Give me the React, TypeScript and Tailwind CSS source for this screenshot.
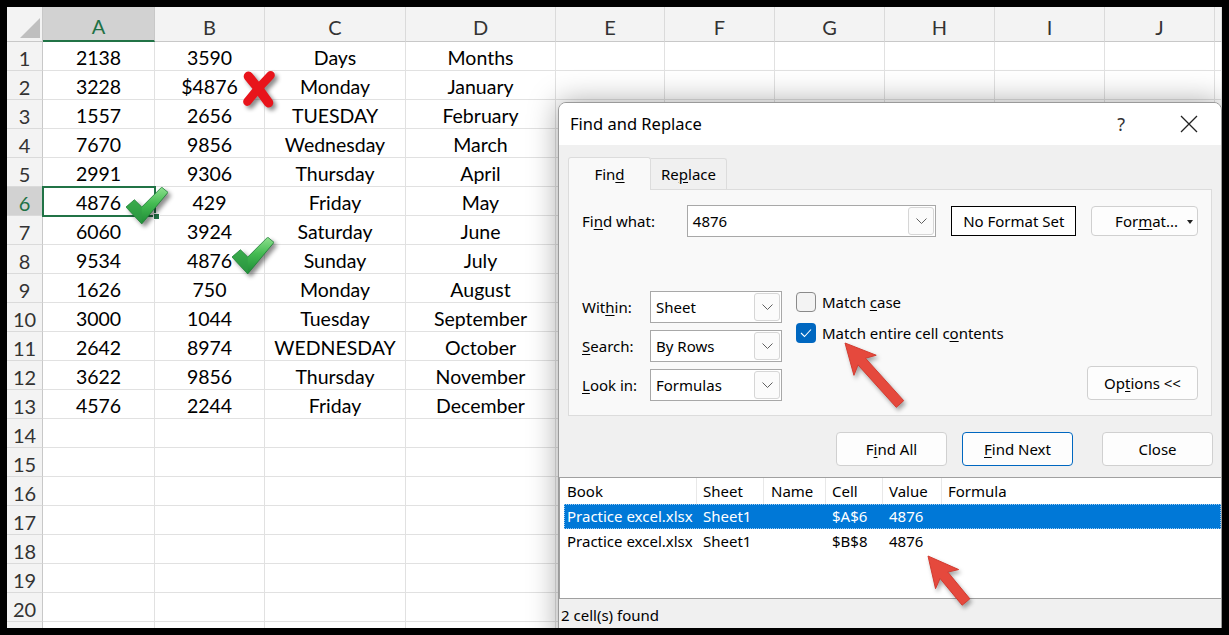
import React from "react";

const COLS = ["A", "B", "C", "D", "E", "F", "G", "H", "I", "J", ""];
const DATA: string[][] = [
  ["2138", "3590", "Days", "Months"],
  ["3228", "$4876", "Monday", "January"],
  ["1557", "2656", "TUESDAY", "February"],
  ["7670", "9856", "Wednesday", "March"],
  ["2991", "9306", "Thursday", "April"],
  ["4876", "429", "Friday", "May"],
  ["6060", "3924", "Saturday", "June"],
  ["9534", "4876", "Sunday", "July"],
  ["1626", "750", "Monday", "August"],
  ["3000", "1044", "Tuesday", "September"],
  ["2642", "8974", "WEDNESDAY", "October"],
  ["3622", "9856", "Thursday", "November"],
  ["4576", "2244", "Friday", "December"],
];

function arrowPoints(tx: number, ty: number, ex: number, ey: number) {
  const dx = ex - tx;
  const dy = ey - ty;
  const L = Math.hypot(dx, dy);
  const ux = dx / L;
  const uy = dy / L;
  const px = -uy;
  const py = ux;
  const headLen = 30;
  const headW = 15;
  const shaftW = 5;
  const notch = 25;
  const bx = tx + ux * headLen;
  const by = ty + uy * headLen;
  const nx = tx + ux * notch;
  const ny = ty + uy * notch;
  const pts = [
    [tx, ty],
    [bx + px * headW, by + py * headW],
    [nx + px * shaftW, ny + py * shaftW],
    [ex + px * shaftW, ey + py * shaftW],
    [ex - px * shaftW, ey - py * shaftW],
    [nx - px * shaftW, ny - py * shaftW],
    [bx - px * headW, by - py * headW],
  ];
  return pts.map((p) => p.join(",")).join(" ");
}

function Check({ left, top }: { left: number; top: number }) {
  return (
    <svg
      className="absolute"
      style={{ left, top, filter: "drop-shadow(3px 3px 2px rgba(0,0,0,0.45))" }}
      width="42"
      height="37"
      viewBox="0 0 40 35"
    >
      <defs>
        <linearGradient id={`g${left}`} x1="0" y1="0" x2="0" y2="1">
          <stop offset="0" stopColor="#8ee08e" />
          <stop offset="0.45" stopColor="#44bb52" />
          <stop offset="1" stopColor="#1e8a36" />
        </linearGradient>
      </defs>
      <polygon points="0,19 8,12 15,19 34,0 40,5 15,35" fill={`url(#g${left})`} stroke="#23803a" strokeWidth="0.8" />
      <polygon points="0,19 8,12 15,19 15,35" fill="#2f9b45" opacity="0.6" />
    </svg>
  );
}

function Chevron() {
  return (
    <svg width="11" height="6" viewBox="0 0 11 6">
      <polyline points="0.5,0.5 5.5,5.5 10.5,0.5" fill="none" stroke="#5f5f5f" strokeWidth="1" />
    </svg>
  );
}

function DropBtn() {
  return (
    <div className="w-[26px] h-[28px] mr-[1px] border border-[#d6d6d6] rounded-[3px] bg-[#fbfbfb] flex items-center justify-center">
      <Chevron />
    </div>
  );
}

function Select({ value }: { value: string }) {
  return (
    <div className="w-[132px] h-[32px] bg-white border border-[#a8a8a8] flex items-center justify-between pl-[5px]">
      <span>{value}</span>
      <DropBtn />
    </div>
  );
}

function Btn({ children, w, h, blue }: { children: React.ReactNode; w: string; h?: string; blue?: boolean }) {
  return (
    <div
      className={`${w} ${h ?? "h-[34px]"} rounded-[4px] border ${
        blue ? "border-[#0067c0]" : "border-[#d0d0d0]"
      } bg-[#fdfdfd] flex items-center justify-center`}
    >
      {children}
    </div>
  );
}

export default function App() {
  const rows = Array.from({ length: 21 }, (_, i) => i + 1);
  return (
    <div className="w-[1229px] h-[635px] bg-black p-[7px]">
      <div className="relative w-[1215px] h-[621px] overflow-hidden bg-white font-['Lato',sans-serif]">
        {/* Spreadsheet grid */}
        <div className="grid grid-cols-[36px_112px_110px_141px_150px_109px_110px_110px_110px_110px_110px_1fr] grid-rows-[35px_repeat(21,29px)]">
          {/* corner */}
          <div className="relative bg-[#f3f3f3] border-r border-b border-[#c8c8c8]">
            <svg className="absolute right-[2px] bottom-[3px]" width="20" height="20" viewBox="0 0 20 20">
              <polygon points="20,0 20,20 0,20" fill="#bfbfbf" />
            </svg>
          </div>
          {COLS.map((c, i) => (
            <div
              key={c + i}
              className={`flex items-center justify-center text-[20px] pt-[5px] border-r ${
                c === "A"
                  ? "bg-[#d2d2d2] text-[#1e7145] border-b-2 border-b-[#217346] border-r-[#c8c8c8]"
                  : "bg-[#f3f3f3] text-[#333] border-b border-b-[#c8c8c8] border-r-[#dadada]"
              }`}
            >
              {c}
            </div>
          ))}
          {rows.map((r) => (
            <React.Fragment key={r}>
              <div
                className={`flex items-center justify-center text-[20px] pt-[3px] border-r border-r-[#c8c8c8] border-b border-b-[#dadada] ${
                  r === 6 ? "bg-[#d2d2d2] text-[#1e7145]" : "bg-[#f3f3f3] text-[#333]"
                }`}
              >
                {r <= 20 ? r : ""}
              </div>
              {COLS.map((c, ci) => (
                <div
                  key={c + ci}
                  className="flex items-center justify-center text-[19.5px] text-black border-r border-b border-[#e1e1e1] pt-[4px]"
                >
                  {ci < 4 && r <= 13 ? DATA[r - 1][ci] : ""}
                </div>
              ))}
            </React.Fragment>
          ))}
        </div>

        {/* Selected cell A6 */}
        <div className="absolute left-[35px] top-[179px] w-[114px] h-[31px] border-2 border-[#217346]" />
        <div className="absolute left-[146px] top-[206px] w-[7px] h-[7px] bg-[#217346] border border-white" />

        {/* Marks */}
        <svg
          className="absolute left-[234px] top-[63px]"
          style={{ filter: "drop-shadow(3px 3px 2px rgba(0,0,0,0.45))" }}
          width="36"
          height="38"
          viewBox="0 0 34 36"
        >
          <path d="M7 6 C13 13, 20 22, 26 31" fill="none" stroke="#e8141b" strokeWidth="9" strokeLinecap="round" />
          <path d="M28 5 C20 13, 13 21, 6 30" fill="none" stroke="#e8141b" strokeWidth="8" strokeLinecap="round" />
        </svg>
        <Check left={119} top={180} />
        <Check left={225} top={230} />

        {/* Dialog */}
        <div className="absolute left-[551px] top-[95px] w-[664px] h-[545px] bg-[#f0f0f0] border border-[#9a9a9a] rounded-t-[8px] shadow-[0_0_30px_rgba(0,0,0,0.35)] font-['Noto_Sans',sans-serif] text-[15px] text-black flex flex-col overflow-hidden">
          <div className="h-[42px] bg-white flex items-center justify-between pl-[11px] pr-[23px] shrink-0">
            <span className="text-[16.5px]">Find and Replace</span>
            <div className="flex items-center gap-[55px]">
              <span className="text-[18px] text-[#333]">?</span>
              <svg width="18" height="18" viewBox="0 0 18 18">
                <path d="M1 1 L17 17 M17 1 L1 17" stroke="#222" strokeWidth="1.3" />
              </svg>
            </div>
          </div>
          <div className="px-[9px] pt-[12px] flex flex-col flex-1">
            {/* Tabs */}
            <div className="flex h-[33px] relative z-10">
              <div className="w-[83px] h-[33px] bg-[#f9f9f9] border border-b-0 border-[#dcdcdc] rounded-t-[3px] flex items-center justify-center">
                <span>
                  Fin<span className="underline underline-offset-2">d</span>
                </span>
              </div>
              <div className="w-[76px] h-[31px] mt-[1px] bg-[#f0f0f0] border-t border-r border-[#dcdcdc] rounded-tr-[3px] flex items-center justify-center">
                <span>
                  Re<span className="underline underline-offset-2">p</span>lace
                </span>
              </div>
            </div>
            {/* Panel */}
            <div className="-mt-[1px] w-[644px] h-[227px] bg-[#f9f9f9] border border-[#dcdcdc] px-[13px] pt-[15px] flex flex-col">
              <div className="flex items-center h-[32px]">
                <span className="w-[105px]">
                  Fi<span className="underline underline-offset-2">n</span>d what:
                </span>
                <div className="w-[250px] h-[32px] bg-white border border-[#a8a8a8] flex items-center justify-between pl-[5px]">
                  <span>4876</span>
                  <DropBtn />
                </div>
                <div className="ml-[15px] w-[125px] h-[30px] border border-black bg-white flex items-center justify-center">
                  No Format Set
                </div>
                <div className="ml-[15px] relative w-[107px] h-[30px] rounded-[4px] border border-[#d0d0d0] bg-[#fdfdfd] flex items-center justify-center pl-[4px]">
                  <span>
                    For<span className="underline underline-offset-2">m</span>at...
                  </span>
                  <svg className="absolute right-[4px] top-[13px]" width="6" height="4" viewBox="0 0 6 4">
                    <polygon points="0,0 6,0 3,4" fill="#222" />
                  </svg>
                </div>
              </div>
              <div className="flex mt-[54px]">
                <div className="flex flex-col gap-[7px]">
                  <div className="flex items-center h-[32px]">
                    <span className="w-[68px]">
                      Wit<span className="underline underline-offset-2">h</span>in:
                    </span>
                    <Select value="Sheet" />
                  </div>
                  <div className="flex items-center h-[32px]">
                    <span className="w-[68px]">
                      <span className="underline underline-offset-2">S</span>earch:
                    </span>
                    <Select value="By Rows" />
                  </div>
                  <div className="flex items-center h-[32px]">
                    <span className="w-[68px]">
                      <span className="underline underline-offset-2">L</span>ook in:
                    </span>
                    <Select value="Formulas" />
                  </div>
                </div>
                <div className="ml-[14px] mt-[1px] flex flex-col gap-[11px]">
                  <div className="flex items-center h-[20px] gap-[6px]">
                    <div className="w-[20px] h-[20px] rounded-[4px] border border-[#8a8a8a] bg-[#f3f3f3]" />
                    <span>
                      Match <span className="underline underline-offset-2">c</span>ase
                    </span>
                  </div>
                  <div className="flex items-center h-[20px] gap-[6px]">
                    <div className="w-[20px] h-[20px] rounded-[4px] bg-[#0067c0] flex items-center justify-center">
                      <svg width="12" height="10" viewBox="0 0 12 10">
                        <polyline points="1,5 4.5,8.5 11,1.5" fill="none" stroke="white" strokeWidth="1.1" />
                      </svg>
                    </div>
                    <span>
                      Match entire cell c<span className="underline underline-offset-2">o</span>ntents
                    </span>
                  </div>
                </div>
                <div className="ml-auto self-end mb-[1px]">
                  <Btn w="w-[111px]">
                    <span>
                      Op<span className="underline underline-offset-2">t</span>ions &lt;&lt;
                    </span>
                  </Btn>
                </div>
              </div>
            </div>
            {/* Buttons */}
            <div className="flex justify-end mt-[16px] mr-[-1px]">
              <Btn w="w-[111px]">
                <span>
                  F<span className="underline underline-offset-2">i</span>nd All
                </span>
              </Btn>
              <div className="ml-[15px]">
                <Btn w="w-[111px]" blue>
                  <span>
                    <span className="underline underline-offset-2">F</span>ind Next
                  </span>
                </Btn>
              </div>
              <div className="ml-[29px]">
                <Btn w="w-[111px]">Close</Btn>
              </div>
            </div>
            {/* Results */}
            <div className="mt-[11px] -ml-[9px] -mr-[9px] h-[122px] bg-white border-t border-b border-l border-[#a0a0a0] pl-[4px] flex flex-col">
              <div className="flex h-[26px] items-center">
                <div className="w-[133px] pl-[3px] h-full flex items-center border-r border-[#e8e8e8]">Book</div>
                <div className="w-[67px] pl-[6px] h-full flex items-center border-r border-[#e8e8e8]">Sheet</div>
                <div className="w-[62px] pl-[7px] h-full flex items-center border-r border-[#e8e8e8]">Name</div>
                <div className="w-[57px] pl-[6px] h-full flex items-center border-r border-[#e8e8e8]">Cell</div>
                <div className="w-[59px] pl-[6px] h-full flex items-center border-r border-[#e8e8e8]">Value</div>
                <div className="pl-[6px] h-full flex items-center">Formula</div>
              </div>
              <div className="flex h-[25px] items-center bg-[#0078d7] text-white outline-1 outline-dotted outline-[#9fcbf0] -outline-offset-1">
                <div className="w-[133px] pl-[3px]">Practice excel.xlsx</div>
                <div className="w-[67px] pl-[6px]">Sheet1</div>
                <div className="w-[62px] pl-[7px]"></div>
                <div className="w-[57px] pl-[6px]">$A$6</div>
                <div className="w-[59px] pl-[6px]">4876</div>
              </div>
              <div className="flex h-[25px] items-center">
                <div className="w-[133px] pl-[3px]">Practice excel.xlsx</div>
                <div className="w-[67px] pl-[6px]">Sheet1</div>
                <div className="w-[62px] pl-[7px]"></div>
                <div className="w-[57px] pl-[6px]">$B$8</div>
                <div className="w-[59px] pl-[6px]">4876</div>
              </div>
            </div>
            <div className="-ml-[9px] pl-[2px] h-[30px] flex items-center pt-[3px]">2 cell(s) found</div>
          </div>
        </div>

        {/* Red arrows */}
        <svg
          className="absolute left-0 top-0 pointer-events-none"
          width="1215"
          height="621"
          style={{ filter: "drop-shadow(2px 3px 2px rgba(0,0,0,0.35))" }}
        >
          <polygon points={arrowPoints(838, 336, 893, 397)} fill="#e5493d" stroke="#d23b30" strokeWidth="1" strokeLinejoin="round" />
          <polygon points={arrowPoints(921, 549, 959, 595)} fill="#e5493d" stroke="#d23b30" strokeWidth="1" strokeLinejoin="round" />
        </svg>
      </div>
    </div>
  );
}
